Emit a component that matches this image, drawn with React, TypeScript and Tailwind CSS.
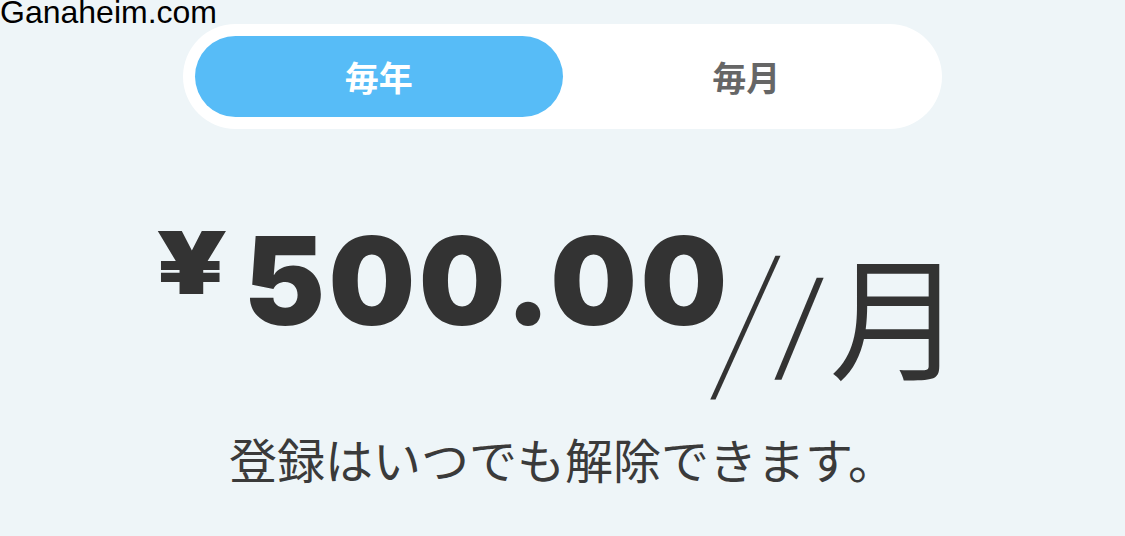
import React, { useState } from 'react';

export default function App() {
	const [period, setPeriod] = useState<'year' | 'month'>('year');

	return (
		<div className="relative h-[536px] w-full overflow-hidden bg-[#eef5f8]">
			{/* Watermark */}
			<div className="absolute left-0 top-[-4px] font-['Liberation_Sans',Arial,sans-serif] text-[32px] leading-none text-black">
				Ganaheim.com
			</div>

			<div className="flex flex-col items-center pt-[24px]">
				{/* Billing toggle */}
				<div className="flex h-[105px] w-[759px] rounded-full bg-white p-[12px] font-['Noto_Sans_CJK_JP',sans-serif] text-[34px] font-bold">
					<button
						onClick={() => setPeriod('year')}
						className={`flex-1 rounded-full ${
							period === 'year' ? 'bg-[#57bcf7] text-white' : 'text-[#666666]'
						}`}
					>
						毎年
					</button>
					<button
						onClick={() => setPeriod('month')}
						className={`flex-1 rounded-full ${
							period === 'month' ? 'bg-[#57bcf7] text-white' : 'text-[#666666]'
						}`}
					>
						毎月
					</button>
				</div>

				{/* Price */}
				<div className="mt-[90px] flex h-[200px] items-start pr-[6px] leading-none text-[#333333]">
					<span className="mr-[37px] inline-block origin-left scale-x-[1.4] font-['Inter',sans-serif] text-[87px] font-black">
						¥
					</span>
					<span className="mt-[1px] font-['Inter',sans-serif] text-[122px] font-black tracking-[3.5px]">
						500.00
					</span>
					<span className="ml-[-14px] mt-[14px] inline-block skew-x-[-5deg] font-['Noto_Sans_CJK_JP',sans-serif] text-[150px] font-thin">
						/
					</span>
					<span className="ml-[4px] mt-[44px] inline-block skew-x-[-6deg] font-['Noto_Sans_CJK_JP',sans-serif] text-[105px]">
						/
					</span>
					<span className="ml-[8px] mt-[26px] font-['Noto_Sans_CJK_JP',sans-serif] text-[134px]">月</span>
				</div>

				{/* Note */}
				<p className="mt-[15px] font-['Noto_Sans_CJK_JP',sans-serif] text-[48px] leading-none text-[#3a3a3a]">
					登録はいつでも解除できます。
				</p>
			</div>
		</div>
	);
}
